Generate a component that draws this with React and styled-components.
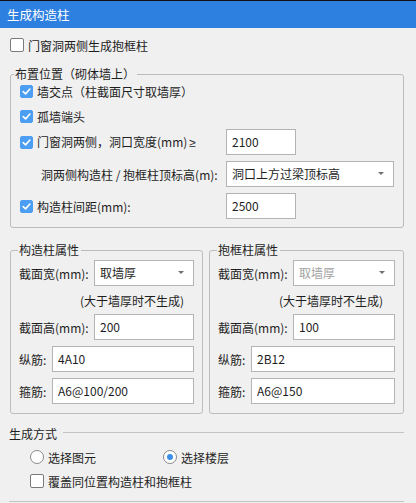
import React, { useState } from 'react';
import styled, { createGlobalStyle } from 'styled-components';

const GlobalStyle = createGlobalStyle`
	html, body {
		margin: 0;
		padding: 0;
		background: #f0f0f0;
	}
	* {
		box-sizing: border-box;
	}
`;

const Window = styled.div`
	width: 416px;
	height: 503px;
	overflow: hidden;
	background: #f0f0f0;
	font-family: "Noto Sans CJK SC", "Noto Sans", sans-serif;
	font-size: 12px;
	color: #1e1e1e;
`;

const TitleBar = styled.div`
	height: 28px;
	border-top: 1px solid #111;
	background: #2e80e0;
	color: #fff;
	display: flex;
	align-items: center;
	padding-left: 7px;
	font-size: 12.5px;
`;

const Body = styled.div`
	padding: 0 12px 0 10px;
	display: flex;
	flex-direction: column;
`;

const Line = styled.label`
	display: flex;
	align-items: center;
	gap: 4px;
	height: ${p => p.h || 24}px;
	margin-top: ${p => p.mt || 0}px;
	padding-left: ${p => p.indent || 0}px;
	cursor: default;
	white-space: nowrap;
`;

const Box = styled.span`
	width: 13px;
	height: 13px;
	flex: none;
	border-radius: 2px;
	display: flex;
	align-items: center;
	justify-content: center;
	background: ${p => (p.checked ? '#4b9ef2' : '#fff')};
	border: 1px solid ${p => (p.checked ? '#4b9ef2' : '#7a7a7a')};
	${p => p.big && 'width: 14px; height: 14px;'}
`;

const Round = styled.span`
	width: 14px;
	height: 14px;
	flex: none;
	border-radius: 50%;
	background: #fff;
	border: 1px solid #8a8a8a;
	display: flex;
	align-items: center;
	justify-content: center;
	&::after {
		content: '';
		width: 6px;
		height: 6px;
		border-radius: 50%;
		background: ${p => (p.checked ? '#3b8eea' : 'transparent')};
	}
`;

const Group = styled.div`
	position: relative;
	border: 1px solid #bcbcbc;
	border-radius: 3px;
	margin-top: ${p => p.mt || 0}px;
	padding: ${p => p.pad};
	width: ${p => (p.w ? `${p.w}px` : 'auto')};
	display: flex;
	flex-direction: column;
`;

const Legend = styled.span`
	position: absolute;
	top: -9px;
	left: ${p => p.left || 3}px;
	padding: 0 2px 0 1px;
	line-height: 16px;
	background: #f0f0f0;
`;

const FieldRow = styled.div`
	display: grid;
	grid-template-columns: ${p => p.label}px ${p => (p.field ? `${p.field}px` : '1fr')};
	align-items: center;
	height: ${p => p.h || 26}px;
	margin-top: ${p => p.mt || 0}px;
	white-space: nowrap;
`;

const Caption = styled.span`
	padding-left: ${p => p.indent || 0}px;
	display: flex;
	align-items: center;
	gap: 4px;
`;

const Latin = styled.span`
	font-family: "Noto Sans", "Liberation Sans", sans-serif;
	margin-left: 2px;
`;

const TextBox = styled.input`
	height: 26px;
	width: 100%;
	border: 1px solid #b4b4b4;
	background: #fff;
	font: inherit;
	color: #1e1e1e;
	padding: 0 5px 1px;
	outline: none;
`;

const Combo = styled.div`
	height: 26px;
	border: 1px solid #b4b4b4;
	background: #fff;
	display: flex;
	align-items: center;
	justify-content: space-between;
	padding: 0 9px 1px 5px;
	color: ${p => (p.disabled ? '#a2a2a2' : '#1e1e1e')};
	&::after {
		content: '';
		border-left: 3.5px solid transparent;
		border-right: 3.5px solid transparent;
		border-top: 3.5px solid #707070;
	}
`;

const Hint = styled.div`
	height: 28px;
	display: flex;
	align-items: center;
	padding-left: ${p => p.indent}px;
	white-space: nowrap;
`;

const Columns = styled.div`
	display: flex;
	gap: 6px;
	margin-top: 22px;
`;

const Section = styled.div`
	display: flex;
	align-items: center;
	gap: 6px;
	margin: 9px 0 0 -1px;
	height: 20px;
	&::after {
		content: '';
		flex: 1;
		border-top: 1px solid #c4c4c4;
		margin-top: -1px;
	}
`;

const RadioRow = styled.div`
	display: flex;
	padding-left: 20px;
	height: 24px;
	margin-top: 2px;
`;

const Rule = styled.div`
	border-top: 1px solid #c4c4c4;
	margin: 8px 0 0 -1px;
`;

const Tick = () => (
	<svg width="9" height="9" viewBox="0 0 9 9">
		<path d="M1.2 4.6 L3.6 6.9 L7.9 2" fill="none" stroke="#fff" strokeWidth="1.6" strokeLinecap="round" strokeLinejoin="round" />
	</svg>
);

const Check = ({ checked, big, onToggle }) => (
	<Box checked={checked} big={big} onClick={onToggle}>
		{checked && <Tick />}
	</Box>
);

const Props = ({ title, w, data, disabled }) => (
	<Group w={w} pad="9px 8px 9px 8px">
		<Legend left={7}>{title}</Legend>
		<FieldRow label={75}>
			<span>截面宽(mm):</span>
			<Combo disabled={disabled}>取墙厚</Combo>
		</FieldRow>
		<Hint indent={61}>(大于墙厚时不生成)</Hint>
		<FieldRow label={75}>
			<span>截面高(mm):</span>
			<TextBox defaultValue={data.height} />
		</FieldRow>
		<FieldRow label={33} mt={6}>
			<span>纵筋:</span>
			<TextBox defaultValue={data.main} />
		</FieldRow>
		<FieldRow label={33} mt={6}>
			<span>箍筋:</span>
			<TextBox defaultValue={data.stirrup} />
		</FieldRow>
	</Group>
);

function App() {
	const [opts, setOpts] = useState({
		frame: false,
		cross: true,
		end: true,
		opening: true,
		spacing: true,
		cover: false,
	});
	const [mode, setMode] = useState('floor');

	const flip = key => e => {
		e.preventDefault();
		setOpts(prev => ({ ...prev, [key]: !prev[key] }));
	};

	return (
		<>
			<GlobalStyle />
			<Window>
				<TitleBar>生成构造柱</TitleBar>
				<Body>
					<Line mt={5} onClick={flip('frame')}>
						<Check big checked={opts.frame} />
						<span>门窗洞两侧生成抱框柱</span>
					</Line>

					<Group mt={17} pad="4px 9px 8px 9px">
						<Legend>布置位置（砌体墙上）</Legend>
						<Line onClick={flip('cross')}>
							<Check checked={opts.cross} />
							<span>墙交点（柱截面尺寸取墙厚）</span>
						</Line>
						<Line mt={1} onClick={flip('end')}>
							<Check checked={opts.end} />
							<span>孤墙端头</span>
						</Line>
						<FieldRow label={206} field={70} mt={1}>
							<Caption onClick={flip('opening')}>
								<Check checked={opts.opening} />
								<span>门窗洞两侧，洞口宽度(mm)<Latin>≥</Latin></span>
							</Caption>
							<TextBox defaultValue="2100" />
						</FieldRow>
						<FieldRow label={206} field={168} mt={6}>
							<Caption indent={21}>洞两侧构造柱 / 抱框柱顶标高(m):</Caption>
							<Combo>洞口上方过梁顶标高</Combo>
						</FieldRow>
						<FieldRow label={206} field={70} mt={6}>
							<Caption onClick={flip('spacing')}>
								<Check checked={opts.spacing} />
								<span>构造柱间距(mm):</span>
							</Caption>
							<TextBox defaultValue="2500" />
						</FieldRow>
					</Group>

					<Columns>
						<Props title="构造柱属性" w={193} data={{ height: '200', main: '4A10', stirrup: 'A6@100/200' }} />
						<Props title="抱框柱属性" w={195} disabled data={{ height: '100', main: '2B12', stirrup: 'A6@150' }} />
					</Columns>

					<Section>生成方式</Section>
					<RadioRow>
						<Line style={{ width: 133 }} onClick={() => setMode('element')}>
							<Round checked={mode === 'element'} />
							<span>选择图元</span>
						</Line>
						<Line onClick={() => setMode('floor')}>
							<Round checked={mode === 'floor'} />
							<span>选择楼层</span>
						</Line>
					</RadioRow>
					<Line indent={20} onClick={flip('cover')}>
						<Check big checked={opts.cover} />
						<span>覆盖同位置构造柱和抱框柱</span>
					</Line>
					<Rule />
				</Body>
			</Window>
		</>
	);
}

export default App;
